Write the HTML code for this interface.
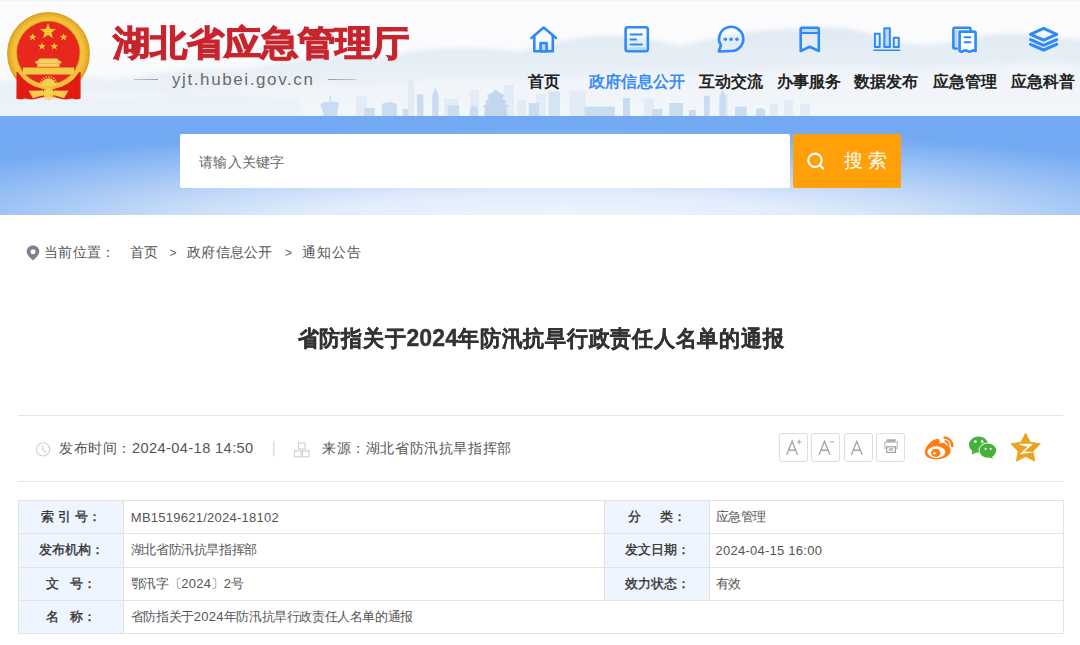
<!DOCTYPE html>
<html><head><meta charset="utf-8">
<style>
*{margin:0;padding:0;box-sizing:border-box}
html,body{width:1080px;height:645px;overflow:hidden;background:#fff;font-family:"Liberation Sans",sans-serif;color:#333}
.abs{position:absolute}
svg{position:absolute;overflow:visible}
#hdr{position:absolute;left:0;top:0;width:1080px;height:116px;background:linear-gradient(180deg,#f1f2f3 0,#f9fafa 2px,#fcfcfd 8px,#fafbfd 50px,#f5f8fb 116px);overflow:hidden}
#band{position:absolute;left:0;top:116px;width:1080px;height:99px;background:radial-gradient(ellipse 760px 100px at 560px 112px,#f2f7fe 0%,#e2edfc 35%,#c4daf8 55%,#9fc4f5 75%,rgba(116,169,242,0) 100%),linear-gradient(180deg,#72a9f2 0,#76acf3 100%)}
.site{position:absolute;left:112.5px;top:21px;transform:scaleY(0.94);transform-origin:0 0;text-shadow:1px 1.5px 1.5px rgba(120,40,40,.18);font-size:37px;font-weight:bold;-webkit-text-stroke:1.2px #c7242d;color:#c7242d;white-space:nowrap;line-height:48px}
.url{position:absolute;left:172px;top:69px;font-size:17px;color:#6c6c6c;letter-spacing:1.6px;line-height:22px}
.nav{position:absolute;top:71.5px;font-size:16px;font-weight:bold;color:#222;white-space:nowrap;transform:translateX(-50%);line-height:20px}
.nav.on{color:#3a8cf5}
.search{position:absolute;left:180px;top:134px;width:610px;height:54px;background:#fff;border-radius:2px}
.search span{position:absolute;left:19px;top:18px;font-size:14px;letter-spacing:0.3px;color:#666;line-height:20px}
.sbtn{position:absolute;left:793px;top:134px;width:108px;height:54px;background:#ff9f0a;border-radius:2px;color:#fff}
.crumb{position:absolute;top:242px;font-size:14px;letter-spacing:0.3px;color:#555;white-space:nowrap;line-height:20px}
.title{position:absolute;left:0;width:1080px;padding-left:2px;top:324px;text-align:center;font-size:21px;letter-spacing:0.75px;transform:scaleY(1.05);-webkit-text-stroke:0.35px #333;font-weight:bold;color:#333;line-height:28px}
.hr{position:absolute;left:18px;width:1045px;height:1px;background:#e6e6e6}
.meta{position:absolute;top:438px;font-size:14px;letter-spacing:0.6px;color:#555;white-space:nowrap;line-height:20px}
.fbtn{position:absolute;top:433px;width:29px;height:29px;padding-right:2px;border:1px solid #dedede;border-radius:3px;color:#a0a0a0;font-size:19px;text-align:center;line-height:27px}
table{position:absolute;left:18px;top:500px;width:1046px;border-collapse:collapse;table-layout:fixed}
td{border:1px solid #e3e3e3;height:33.3px;font-size:13px;letter-spacing:-0.4px;color:#555;padding:0 0 0 6.8px;white-space:nowrap}
td.l{background:#eef5fe;font-weight:normal;-webkit-text-stroke:0.35px #333;color:#333;text-align:center;padding:0;letter-spacing:0}
.n{letter-spacing:0.25px}
</style></head><body>
<div id="hdr">
<svg width="1080" height="116" style="left:0;top:0;filter:blur(2px)">
<defs>
<linearGradient id="mg" x1="0" y1="0" x2="0" y2="1"><stop offset="0" stop-color="#dbe6f1"/><stop offset="0.5" stop-color="#e8eff6"/><stop offset="1" stop-color="#eef3f9"/></linearGradient>
</defs>
<path d="M-20,84 C30,78 70,74 110,80 C150,76 190,66 240,70 C290,62 330,52 380,58 C420,48 470,44 520,52 C545,44 570,38 600,36 C630,34 650,40 680,46 C710,40 740,30 780,30 C810,28 840,24 870,34 C900,44 920,48 950,42 C980,36 1010,30 1040,36 C1060,38 1080,40 1100,40 L1100,130 L-20,130 Z" fill="url(#mg)" opacity="0.85"/>
<path d="M-20,100 C60,94 120,90 180,96 C240,86 300,82 360,88 C420,80 480,76 540,82 C600,74 660,70 720,76 C780,68 840,62 900,70 C960,66 1020,62 1100,66 L1100,130 L-20,130 Z" fill="#f3f7fb" opacity="0.75"/>
<path d="M-20,96 C40,92 80,96 120,100 C160,96 220,92 300,100 L300,130 L-20,130Z" fill="#e9f0f7" opacity="0.8"/>
</svg>
<svg width="1080" height="116" style="left:0;top:0">
<g fill="#e3ecf6">
<rect x="356" y="96" width="11" height="20"/><rect x="408" y="80" width="6" height="36"/>
<rect x="444" y="99" width="14" height="17"/><rect x="470" y="90" width="9" height="26"/>
<rect x="504" y="85" width="10" height="31"/><rect x="517" y="100" width="9" height="16"/>
<rect x="536" y="94" width="10" height="22"/><rect x="550" y="92.7" width="10" height="23.3"/>
<rect x="569.7" y="90.4" width="16.2" height="25.6"/><rect x="643.7" y="98.5" width="10.3" height="17.5"/>
<rect x="719" y="94" width="9" height="22"/><rect x="770" y="104" width="8" height="12"/>
<rect x="784" y="100" width="9" height="16"/><rect x="800" y="104" width="10" height="12"/>
</g>
<g fill="#c8dcf2">
<path d="M320.4,104 C326,101 334,101 339,103 L337,116 L324,116 Z"/><rect x="329.5" y="96" width="1.5" height="8"/>
<rect x="364.4" y="107.8" width="10.4" height="8.2"/>
<path d="M381.8,116 L381.8,104 Q389.3,100 396.8,104 L396.8,116Z"/>
<rect x="402.6" y="109" width="5.8" height="7"/>
<rect x="417" y="94.4" width="6.4" height="21.6"/>
<path d="M432.2,116 L432.2,96 L435.3,87 L438.5,96 L438.5,116Z"/>
<rect x="447.7" y="105.5" width="11.6" height="10.5"/>
<path d="M469.7,116 L469.7,108 Q473.7,104 477.8,108 L477.8,116Z"/>
<path d="M484,116 L485,108 L482.5,106 L487,104 L485,101 L489,99 L487,95 L492,93 L495.7,89.3 L499.5,93 L504.5,95 L502.5,99 L506.5,101 L504.5,104 L509,106 L506.5,108 L507.5,116Z" fill="#c2d6ef"/>
<rect x="528.8" y="103" width="10.2" height="13"/>
<rect x="548.4" y="91.6" width="11.6" height="24.4" fill="#d5e4f4"/>
<rect x="584.7" y="106.6" width="30.1" height="9.4"/>
<rect x="623" y="98" width="7" height="18"/>
<rect x="651.9" y="109" width="10.4" height="7"/>
<rect x="669.2" y="103" width="13.8" height="13"/>
<rect x="688.9" y="110" width="6.9" height="6"/>
<rect x="704" y="95.7" width="5.7" height="20.3"/>
<path d="M719.5,116 L719.5,97 L722.6,89.3 L725.7,97 L725.7,116Z"/>
<rect x="735" y="106.6" width="11.8" height="9.4"/>
<path d="M756,116 L756,110 Q760.5,106 765,110 L765,116Z"/>
</g>
</svg>
</div>

<!-- emblem -->
<svg width="96" height="100" style="left:0;top:5px" viewBox="0 5 96 100">
<defs>
<radialGradient id="gold" cx="50%" cy="50%" r="50%"><stop offset="0.7" stop-color="#f6c83e"/><stop offset="0.88" stop-color="#f0ba32"/><stop offset="1" stop-color="#dc9c20"/></radialGradient>
</defs>
<circle cx="48.5" cy="53.5" r="41.5" fill="url(#gold)"/>
<circle cx="48.5" cy="53.3" r="38.5" fill="none" stroke="#e9b53a" stroke-width="1.4" stroke-dasharray="2 1.6" opacity=".8"/>
<!-- drapes -->
<path d="M16.6,72 L80.6,72 L80.6,98.8 L76,99.6 L72,98.6 L67,99.6 L62.5,99.2 L56,97.5 L48.5,96.5 L41,97.5 L34.5,99.2 L30,99.6 L25,98.6 L21,99.6 L16.4,98.8Z" fill="#e21c13"/>
<path d="M22,76 L21,98 M27,80 L26.5,98 M71,80 L71.5,98 M76,76 L77,98" stroke="#c9150e" stroke-width="0.8" opacity=".6"/>
<circle cx="48.5" cy="53.2" r="36" fill="#f2c03a"/>
<circle cx="48.3" cy="52.8" r="32" fill="#d0961e"/>
<circle cx="48.3" cy="52.8" r="31.2" fill="#e8271d"/>
<g fill="#f9c930">
<path d="M48,23 L50.1,28.7 L56.1,28.9 L51.4,32.5 L53,38.3 L48,35 L43,38.3 L44.6,32.5 L39.9,28.9 L45.9,28.7Z"/>
<path d="M32.6,33.2 L33.6,35.8 L36.4,35.9 L34.2,37.6 L35,40.3 L32.6,38.7 L30.2,40.3 L31,37.6 L28.8,35.9 L31.6,35.8Z"/>
<path d="M63.6,33.2 L64.6,35.8 L67.4,35.9 L65.2,37.6 L66,40.3 L63.6,38.7 L61.2,40.3 L62,37.6 L59.8,35.9 L62.6,35.8Z"/>
<path d="M41.9,42.4 L42.9,45 L45.7,45.1 L43.5,46.8 L44.3,49.5 L41.9,47.9 L39.5,49.5 L40.3,46.8 L38.1,45.1 L40.9,45Z"/>
<path d="M54.3,42.4 L55.3,45 L58.1,45.1 L55.9,46.8 L56.7,49.5 L54.3,47.9 L51.9,49.5 L52.7,46.8 L50.5,45.1 L53.3,45Z"/>
</g>
<g fill="#f8d25c">
<path d="M39.5,58.4 L57.2,58.4 L58.8,60.6 L62,61.8 L60.8,63.4 L36,63.4 L34.8,61.8 L38,60.6Z"/>
<rect x="37.2" y="63.4" width="22.4" height="3.4"/>
<path d="M23,67.4 L74,67.4 L74.3,74.4 L22.8,74.4Z" fill="#f5ca48"/>
</g>
<!-- swag -->
<path d="M21,82 C28,88 38,90 48.5,89.5 C59,90 69,88 76,82 L77,86 C70,92 60,93.5 48.5,93.5 C37,93.5 27,92 20,86Z" fill="#e21c13"/>
<!-- gear -->
<path d="M40.8,86 A7.7,7.7 0 0 1 56.2,86Z" fill="#f7cd4c"/>
<circle cx="48.5" cy="85" r="8.4" fill="none" stroke="#f3c23a" stroke-width="1.6" stroke-dasharray="1.3 1.3" clip-path="inset(0 0 50% 0)"/>
<!-- gold ribbons -->
<path d="M28.5,90.8 L42.5,90.5 L45,94.5 L33,98.2 Z" fill="#f6cd4a"/>
<path d="M68.5,90.8 L54.5,90.5 L52,94.5 L64,98.2 Z" fill="#f6cd4a"/>
<circle cx="48.5" cy="93.3" r="5.4" fill="#f8d04a"/>
<circle cx="48.5" cy="93.3" r="6.4" fill="none" stroke="#f3c23a" stroke-width="1.4" stroke-dasharray="1.2 1.2"/>
</svg>

<div class="site">湖北省应急管理厅</div>
<div class="url">yjt.hubei.gov.cn</div>
<div class="abs" style="left:134px;top:79px;width:24px;height:1px;background:linear-gradient(90deg,#c4c8cc,#9a9ea2)"></div>
<div class="abs" style="left:328px;top:79px;width:28px;height:1px;background:linear-gradient(90deg,#9a9ea2,#c4c8cc)"></div>

<!-- nav icons -->
<svg width="1080" height="60" style="left:0;top:0" fill="none" stroke="#2e8af7" stroke-width="2.6" stroke-linejoin="round" stroke-linecap="round">
<!-- home -->
<path d="M531.5,38 L543.7,27.5 L556,38"/>
<path d="M534.3,35.5 L534.3,51.3 L552.8,51.3 L552.8,35.5"/>
<rect x="540.6" y="43" width="6" height="8.3" fill="#b9d6fb"/>
<!-- doc -->
<rect x="625.6" y="27.3" width="22.2" height="24" rx="2.2"/>
<rect x="627" y="47.3" width="19.4" height="2.8" fill="#bcd7fb" stroke="none"/>
<path d="M630.5,34.5 L642,34.5 M630.5,39.5 L636,39.5 M630.5,44.6 L642,44.6" stroke-width="2"/>
<!-- chat -->
<path d="M720.9,45.3 L718.8,51.5 L731.2,51 A12.1,12.1 0 1 0 720.9,45.3 Z"/>
<circle cx="725.3" cy="39.3" r="1.75" fill="#2e8af7" stroke="none"/>
<circle cx="731.1" cy="39.3" r="1.75" fill="#2e8af7" stroke="none"/>
<circle cx="736.9" cy="39.3" r="1.75" fill="#2e8af7" stroke="none"/>
<!-- bookmark -->
<rect x="801" y="29" width="17.6" height="3.5" fill="#bcd7fb" stroke="none"/>
<path d="M800.7,51 L800.7,29 Q800.7,27.7 802,27.7 L817.5,27.7 Q818.8,27.7 818.8,29 L818.8,51 L809.8,46.8 Z"/>
<path d="M800.7,33 L818.8,33" stroke-width="2"/>
<!-- bar chart -->
<g stroke-width="2">
<rect x="874.9" y="33.8" width="4.8" height="13.2"/>
<rect x="884.3" y="28.2" width="5.6" height="18.8" fill="#bcd7fb"/>
<rect x="893.8" y="37.8" width="5" height="9.2"/>
<path d="M874,50.3 L899.7,50.3" stroke-width="1.6"/>
</g>
<!-- copy doc -->
<path d="M956.8,48.5 L954.5,48.5 Q953.4,48.5 953.4,47.3 L953.4,29 Q953.4,27.8 954.5,27.8 L969.3,27.8 Q970.5,27.8 970.5,29 L970.5,31.4" />
<rect x="955" y="29.6" width="2.6" height="17" fill="#bcd7fb" stroke="none"/>
<path d="M959.6,31.6 L974.5,31.6 Q975.6,31.6 975.6,32.8 L975.6,51 Q973.5,49.6 971.6,51 Q969.4,52.4 967.4,51 Q965.3,49.6 963.4,51 Q961.6,52.4 959.6,51 Z" fill="#fff"/>
<path d="M964.6,37.2 L970.4,37.2 M964.6,42.2 L970.4,42.2" stroke-width="2"/>
<!-- layers -->
<g stroke-width="3">
<path d="M1030.5,34.3 L1043.6,28.3 L1056.7,34.3 L1043.6,40.2 Z"/>
<path d="M1030.5,39.6 L1043.6,45.3 L1056.7,39.6"/>
<path d="M1030.5,44.3 L1043.6,50 L1056.7,44.3"/>
</g>
</svg>

<div class="nav" style="left:544px">首页</div>
<div class="nav on" style="left:636.5px">政府信息公开</div>
<div class="nav" style="left:731px">互动交流</div>
<div class="nav" style="left:809px">办事服务</div>
<div class="nav" style="left:886px">数据发布</div>
<div class="nav" style="left:964.5px">应急管理</div>
<div class="nav" style="left:1042.5px">应急科普</div>

<div id="band"></div>
<div class="search"><span>请输入关键字</span></div>
<div class="sbtn">
<svg width="30" height="30" style="left:0;top:0" viewBox="793 134 30 30"></svg>
<span class="abs" style="left:51px;top:15px;font-size:19px;letter-spacing:5px;font-weight:300;line-height:24px">搜索</span>
</div>
<svg width="1080" height="645" style="left:0;top:0" fill="none" stroke="#fff" stroke-width="2.1" stroke-linecap="round">
<circle cx="815" cy="160.3" r="6.7"/>
<path d="M820,165.4 L823.2,168.6"/>
</svg>

<!-- breadcrumb -->
<svg width="14" height="16" style="left:26px;top:245px" viewBox="0 0 14 16">
<path d="M7,0.5 C10.6,0.5 13.3,3.2 13.3,6.6 C13.3,10 9.5,13 7,15.5 C4.5,13 0.7,10 0.7,6.6 C0.7,3.2 3.4,0.5 7,0.5 Z M7,4.2 A2.5,2.5 0 1 0 7,9.2 A2.5,2.5 0 1 0 7,4.2 Z" fill="#80808e" fill-rule="evenodd"/>
</svg>
<div class="crumb" style="left:44px">当前位置：</div>
<div class="crumb" style="left:130px">首页</div>
<div class="crumb" style="left:169.5px;font-size:12px;top:243px;color:#666">&gt;</div>
<div class="crumb" style="left:187px">政府信息公开</div>
<div class="crumb" style="left:285px;font-size:12px;top:243px;color:#666">&gt;</div>
<div class="crumb" style="left:302px;letter-spacing:0.9px">通知公告</div>

<div class="title">省防指关于<span style="letter-spacing:0.1px;font-size:23px">2024</span>年防汛抗旱行政责任人名单的通报</div>
<div class="hr" style="top:415px"></div>
<div class="hr" style="top:481px"></div>

<!-- meta -->
<svg width="1080" height="645" style="left:0;top:0" fill="none" stroke="#cfcfcf" stroke-width="1.1">
<circle cx="43.1" cy="449.4" r="6.6"/>
<path d="M42.8,445 L42.8,450 L45.6,452.2"/>
<path d="M273.8,441.5 L273.8,456.5" stroke="#d0d0d0"/>
<rect x="298.5" y="443" width="6.5" height="6"/>
<rect x="294.5" y="450.8" width="6.5" height="6"/>
<rect x="302.5" y="450.8" width="6.5" height="6"/>
</svg>
<div class="meta" style="left:59px">发布时间：<span style="letter-spacing:0.4px;font-size:14.6px">2024-04-18 14:50</span></div>
<div class="meta" style="left:322px">来源：湖北省防汛抗旱指挥部</div>

<div class="fbtn" style="left:779px"></div>
<div class="fbtn" style="left:811px"></div>
<div class="fbtn" style="left:844px"></div>
<div class="fbtn" style="left:876px"></div>
<svg width="1080" height="645" style="left:0;top:0">
<g fill="none" stroke="#a4a4a4" stroke-width="1.35" stroke-linejoin="miter">
<path d="M786.7,454.8 L792.1,441.3 L797.5,454.8 M788.6,450.2 L795.6,450.2"/>
<path d="M819.1,454.8 L824.5,441.3 L829.9,454.8 M821,450.2 L828,450.2"/>
<path d="M851.4,454.8 L856.8,441.3 L862.2,454.8 M853.3,450.2 L860.3,450.2"/>
</g>
<path d="M799.2,439.6 L799.2,444.2 M796.9,441.9 L801.5,441.9" stroke="#a4a4a4" stroke-width="1"/>
<path d="M830,441.9 L834,441.9" stroke="#a4a4a4" stroke-width="1"/>
<!-- printer -->
<rect x="886.4" y="439.3" width="9.4" height="3.2" rx="0.8" fill="#ababab"/>
<path d="M886.2,448.2 L884.9,448.2 L884.9,441.7 L897.3,441.7 L897.3,448.2 L896,448.2" fill="none" stroke="#b8b8b8" stroke-width="1.1"/>
<rect x="886.7" y="446.8" width="8.8" height="5.6" fill="#fff" stroke="#999" stroke-width="1.1"/>
<rect x="888.8" y="448.1" width="4.6" height="2.7" fill="#bdbdbd"/>
<!-- weibo -->
<g>
<path d="M924.9,453 C924.6,447 930,440.6 936.3,438.9 C939,438.3 940.3,440.2 939.4,443.2 C942,442.3 945,442.4 945.9,444.8 C949,445.8 951.2,448.4 950.6,451.6 C950,456.2 943.5,459.4 936.5,459.3 C929.5,459.2 925.1,456.8 924.9,453Z" fill="#ff7e0f"/>
<ellipse cx="936.4" cy="452.1" rx="9" ry="5.9" fill="#fff"/>
<ellipse cx="935.8" cy="452.8" rx="4.7" ry="4" fill="#ff7e0f"/>
<circle cx="934.4" cy="453.3" r="1.3" fill="#fff"/>
<path d="M944.6,437.6 A8.3,8.3 0 0 1 952.3,446" fill="none" stroke="#ff7e0f" stroke-width="2.5" stroke-linecap="round"/>
<path d="M945.5,441.2 A3.8,3.8 0 0 1 948.6,444.6" fill="none" stroke="#ff7e0f" stroke-width="2.1" stroke-linecap="round"/>
</g>
<!-- wechat -->
<g fill="#46b23c">
<ellipse cx="978.6" cy="444.7" rx="9.7" ry="8.1"/>
<path d="M972,451 L971.8,454.6 L976.5,452.5Z"/>
<circle cx="975.4" cy="441.6" r="1.3" fill="#fff"/>
<circle cx="982.2" cy="441.6" r="1.3" fill="#fff"/>
<ellipse cx="987.8" cy="450.6" rx="9.2" ry="8" fill="#fff"/>
<ellipse cx="987.8" cy="450.6" rx="8.4" ry="7.2"/>
<path d="M991.5,456.5 L993.6,458.8 L989,457.6Z"/>
<circle cx="985.6" cy="448.8" r="1.1" fill="#fff"/>
<circle cx="990.6" cy="448.8" r="1.1" fill="#fff"/>
</g>
<!-- qzone -->
<path d="M1025.6,433.0 L1030.3,442.2 L1040.4,443.8 L1033.2,451.1 L1034.8,461.2 L1025.6,456.6 L1016.4,461.2 L1018,451.1 L1010.8,443.8 L1020.9,442.2Z" fill="#eba21f" stroke="#eba21f" stroke-width="0.8" stroke-linejoin="round"/>
<path d="M1018.5,444.2 C1023,443.6 1029,443.6 1033,444.2 L1024,451.6 C1028,451.4 1032,451.8 1035.5,452.6 C1030,453 1024,453.6 1019.5,454.6 L1027.6,446.6 C1024.5,446 1021.5,445.4 1018.5,444.2Z" fill="#fff"/>
</svg>

<table>
<colgroup><col style="width:105px"><col style="width:481px"><col style="width:105px"><col></colgroup>
<tr><td class="l">索 引 号：</td><td><span class="n">MB1519621/2024-18102</span></td><td class="l">分&nbsp;&nbsp;&nbsp;&nbsp;&nbsp;类：</td><td style="padding-left:5.5px">应急管理</td></tr>
<tr><td class="l">发布机构：</td><td>湖北省防汛抗旱指挥部</td><td class="l">发文日期：</td><td style="padding-left:5.5px"><span class="n">2024-04-15 16:00</span></td></tr>
<tr><td class="l">文&nbsp;&nbsp;&nbsp;号：</td><td>鄂汛字〔<span class="n">2024</span>〕<span class="n">2</span>号</td><td class="l">效力状态：</td><td style="padding-left:5.5px">有效</td></tr>
<tr><td class="l">名&nbsp;&nbsp;&nbsp;称：</td><td colspan="3">省防指关于<span class="n">2024</span>年防汛抗旱行政责任人名单的通报</td></tr>
</table>
</body></html>
